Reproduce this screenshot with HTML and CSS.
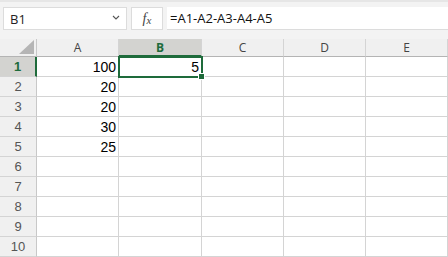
FILE: index.html
```html
<!DOCTYPE html>
<html lang="en">
    <head>
        <meta charset="UTF-8" />
        <title>Sheet</title>
        <link rel="stylesheet" href="styles.css">
    </head>
    <body>
        <div class="toolbar">
            <div class="name-box">
                <span>B1</span>
                <svg class="caret" width="8" height="5" viewBox="0 0 8 5">
                    <path d="M1 1 L4 4 L7 1" fill="none" stroke="#555" stroke-width="1.1" />
                </svg>
            </div>
            <div class="fx-box"><i>f</i><i class="x">x</i></div>
            <div class="formula">=A1-A2-A3-A4-A5</div>
        </div>

        <div class="sheet">
            <div class="corner"><span class="tri"></span></div>
            <div class="col-head">A</div>
            <div class="col-head active">B</div>
            <div class="col-head">C</div>
            <div class="col-head">D</div>
            <div class="col-head">E</div>
            <div class="col-head edge"></div>

            <div class="row-head active">1</div>
            <div class="cell num">100</div>
            <div class="cell num selected">5<span class="handle"></span></div>
            <div class="cell"></div><div class="cell"></div><div class="cell"></div><div class="cell edge"></div>

            <div class="row-head">2</div>
            <div class="cell num">20</div>
            <div class="cell"></div><div class="cell"></div><div class="cell"></div><div class="cell"></div><div class="cell edge"></div>

            <div class="row-head">3</div>
            <div class="cell num">20</div>
            <div class="cell"></div><div class="cell"></div><div class="cell"></div><div class="cell"></div><div class="cell edge"></div>

            <div class="row-head">4</div>
            <div class="cell num">30</div>
            <div class="cell"></div><div class="cell"></div><div class="cell"></div><div class="cell"></div><div class="cell edge"></div>

            <div class="row-head">5</div>
            <div class="cell num">25</div>
            <div class="cell"></div><div class="cell"></div><div class="cell"></div><div class="cell"></div><div class="cell edge"></div>

            <div class="row-head">6</div>
            <div class="cell"></div><div class="cell"></div><div class="cell"></div><div class="cell"></div><div class="cell"></div><div class="cell edge"></div>

            <div class="row-head">7</div>
            <div class="cell"></div><div class="cell"></div><div class="cell"></div><div class="cell"></div><div class="cell"></div><div class="cell edge"></div>

            <div class="row-head">8</div>
            <div class="cell"></div><div class="cell"></div><div class="cell"></div><div class="cell"></div><div class="cell"></div><div class="cell edge"></div>

            <div class="row-head">9</div>
            <div class="cell"></div><div class="cell"></div><div class="cell"></div><div class="cell"></div><div class="cell"></div><div class="cell edge"></div>

            <div class="row-head">10</div>
            <div class="cell"></div><div class="cell"></div><div class="cell"></div><div class="cell"></div><div class="cell"></div><div class="cell edge"></div>
        </div>
    </body>
</html>
```

FILE: styles.css
```css
body {
    margin: 0;
    background-color: #f3f3f3;
    font-family: "Open Sans", "Liberation Sans", sans-serif;
    overflow: hidden;
}

.toolbar {
    display: flex;
    align-items: stretch;
    gap: 4px;
    height: 23px;
    padding: 5px 0 9px 3px;
    border-top: 2px solid #e6e6e6;
    box-sizing: content-box;
}

.name-box {
    width: 110px;
    display: flex;
    align-items: center;
    justify-content: space-between;
    padding: 0 6px 0 6px;
    background-color: #fff;
    border: 1px solid #dcdcdc;
    font-size: 13px;
    color: #222;
}

.caret {
    margin-top: -2px;
}

.fx-box {
    width: 30px;
    display: flex;
    align-items: center;
    justify-content: center;
    background-color: #fff;
    border: 1px solid #dcdcdc;
    font-family: "Liberation Serif", serif;
    font-size: 14px;
    color: #444;
}

.fx-box .x {
    font-size: 11px;
    margin-top: 3px;
}

.formula {
    flex: 1;
    display: flex;
    align-items: center;
    padding-left: 3px;
    background-color: #fff;
    border-bottom: 1px solid #dcdcdc;
    font-size: 13px;
    color: #111;
}

.sheet {
    display: grid;
    grid-template-columns: 37px 82px 83px 82px 82px 82px 10px;
    grid-template-rows: 18px repeat(10, 20px);
    background-color: #fff;
}

.corner {
    background-color: #f0f0f0;
    border-right: 1px solid #c8c8c8;
    border-bottom: 1px solid #b4b4b4;
    position: relative;
}

.tri {
    position: absolute;
    right: 2px;
    bottom: 2px;
    width: 0;
    height: 0;
    border-left: 15px solid transparent;
    border-bottom: 14px solid #b5b5b5;
}

.col-head {
    background-color: #f0f0f0;
    border-right: 1px solid #d4d4d4;
    border-bottom: 1px solid #b4b4b4;
    display: flex;
    align-items: center;
    justify-content: center;
    font-size: 12px;
    color: #444;
}

.col-head.active {
    background-color: #d3d3d0;
    color: #1e6b3b;
    font-weight: bold;
    border-bottom: 2px solid #1e6b3b;
}

.col-head.edge {
    border-right: none;
}

.row-head {
    background-color: #f0f0f0;
    border-right: 1px solid #c8c8c8;
    border-bottom: 1px solid #d4d4d4;
    display: flex;
    align-items: center;
    justify-content: center;
    font-family: "Liberation Sans", sans-serif;
    font-size: 13px;
    color: #555;
}

.row-head.active {
    background-color: #d3d3d0;
    color: #1e6b3b;
    font-weight: bold;
    border-right: 2px solid #1e6b3b;
}

.cell {
    border-right: 1px solid #d4d4d4;
    border-bottom: 1px solid #d4d4d4;
    font-family: "Liberation Sans", sans-serif;
    font-size: 14px;
    color: #000;
    display: flex;
    align-items: center;
    justify-content: flex-end;
    padding-right: 2px;
}

.cell.edge {
    border-right: none;
}

.cell.selected {
    position: relative;
    outline: 2px solid #1e6b3b;
    outline-offset: -1px;
}

.handle {
    position: absolute;
    right: -4px;
    bottom: -4px;
    width: 5px;
    height: 5px;
    background-color: #1e6b3b;
    border: 1px solid #fff;
}
```
